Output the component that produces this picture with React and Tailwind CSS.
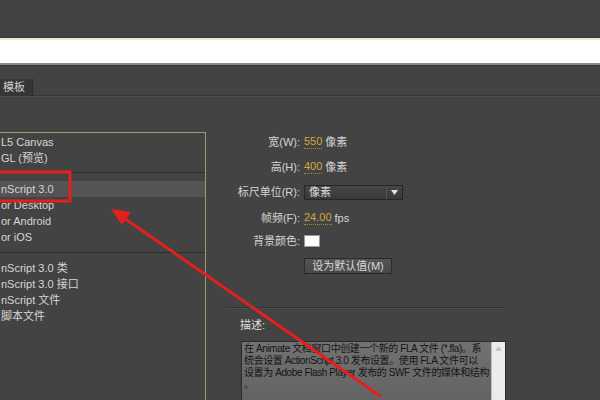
import React from "react";

const leftTop = ["L5 Canvas", "GL (预览)"];
const leftMid = ["or Desktop", "or Android", "or iOS"];
const leftBottom = ["nScript 3.0 类", "nScript 3.0 接口", "nScript 文件", "脚本文件"];

const descLines = [
  "在 Animate 文档窗口中创建一个新的 FLA 文件 (*.fla)。系",
  "统会设置 ActionScript 3.0 发布设置。使用 FLA 文件可以",
  "设置为 Adobe Flash Player 发布的 SWF 文件的媒体和结构",
  "。",
];

const Row = ({ label, children, className = "" }) => (
  <div className={`flex items-center h-[16px] ${className}`}>
    <div className="w-[96px] text-right pr-[2px] text-[#d4d4d4]">{label}</div>
    <div className="flex items-center pl-[2px] gap-[3px]">{children}</div>
  </div>
);

const Value = ({ children }) => (
  <span className="text-[#d2a93e] border-b border-dotted border-[#a48a3c] leading-[13px]">{children}</span>
);

export default function App() {
  return (
    <div
      className="relative w-[600px] h-[400px] overflow-hidden bg-[#434343] text-[11px]"
      style={{ fontFamily: '"Liberation Sans", "Noto Sans CJK SC", sans-serif' }}
    >
      {/* top strip */}
      <div className="h-[38px] bg-[#424242] border-b border-[#3a3a36]" />
      <div className="h-[27px] bg-white border-t-2 border-[#f3ecc4] border-b-2 border-b-[#8a8a8a]" />
      <div className="h-[14px] bg-[#434343] border-t border-[#363636]" />

      {/* tab row */}
      <div className="h-[17px] flex border-b border-[#353535] shadow-[0_1px_0_#4e4e4e]">
        <div className="w-[33px] h-[16px] bg-[#363636] border-r border-[#2c2c2c] text-[#cfcfcf] pl-[3px] leading-[16px]">
          模板
        </div>
      </div>

      <div className="flex">
        {/* left list panel */}
        <div className="mt-[36px] w-[206px] h-[400px] border-t border-r border-[#a09868] text-[#d6d6d6] pt-[1px]">
          {leftTop.map((t) => (
            <div key={t} className="h-[16px] leading-[16px] pl-[1px]">{t}</div>
          ))}
          <div className="mt-[6px] h-px bg-[#2e2e2e]" />
          <div className="mt-[8px] h-[16px] leading-[16px] pl-[1px] bg-[#545454]">nScript 3.0</div>
          {leftMid.map((t) => (
            <div key={t} className="h-[16px] leading-[16px] pl-[1px]">{t}</div>
          ))}
          <div className="mt-[7px] h-px bg-[#2e2e2e]" />
          <div className="mt-[7px]">
            {leftBottom.map((t) => (
              <div key={t} className="h-[16px] leading-[16px] pl-[1px]">{t}</div>
            ))}
          </div>
        </div>

        {/* right settings */}
        <div className="flex-1 pt-[38px]">
          <Row label="宽(W):">
            <Value>550</Value>
            <span className="text-[#d4d4d4]">像素</span>
          </Row>
          <Row label="高(H):" className="mt-[9px]">
            <Value>400</Value>
            <span className="text-[#d4d4d4]">像素</span>
          </Row>
          <Row label="标尺单位(R):" className="mt-[9px]">
            <div className="w-[99px] h-[15px] flex bg-gradient-to-b from-[#464646] to-[#383838] border border-[#262626] text-[#dcdcdc]">
              <span className="flex-1 pl-[4px] leading-[13px]">像素</span>
              <span className="w-[16px] border-l border-[#555] flex items-center justify-center">
                <svg width="7" height="5" viewBox="0 0 7 5"><path d="M0 0h7L3.5 5z" fill="#e6e6e6" /></svg>
              </span>
            </div>
          </Row>
          <Row label="帧频(F):" className="mt-[10px]">
            <Value>24.00</Value>
            <span className="text-[#d4d4d4]">fps</span>
          </Row>
          <Row label="背景颜色:" className="mt-[7px]">
            <div className="w-[16px] h-[12px] bg-white border border-[#999]" />
          </Row>
          <div className="mt-[9px] ml-[98px] w-[88px] h-[16px] bg-gradient-to-b from-[#555] to-[#474747] border border-[#2a2a2a] text-[#dadada] text-center leading-[14px]">
            设为默认值(M)
          </div>

          <div className="mt-[33px] ml-[19px] w-[282px] h-[2px] bg-[#363636] border-b border-[#4c4c4c]" />
          <div className="mt-[9px] ml-[34px] h-[14px] leading-[14px] text-[#e0e0e0]">描述:</div>
          <div className="mt-[9px] ml-[35px] w-[265px] h-[80px] flex border border-[#2a2a2a] bg-gradient-to-b from-[#727272] to-[#5e5e5e]">
            <div className="flex-1 overflow-hidden pl-[2px] pt-[1px] text-[#141414] leading-[12px] text-[10px] tracking-[-0.4px]">
              {descLines.map((l, i) => (
                <div key={i} className="whitespace-nowrap">{l}</div>
              ))}
            </div>
            <div className="w-[14px] bg-[#ececec] border-l border-[#bdbdbd] flex justify-center pt-[4px]">
              <svg width="7" height="5" viewBox="0 0 7 5"><path d="M0 5h7L3.5 0z" fill="#c4c4c4" /></svg>
            </div>
          </div>
        </div>
      </div>

      {/* red annotations */}
      <svg className="absolute inset-0 pointer-events-none" width="600" height="400">
        <rect x="-6" y="172" width="76" height="29" fill="none" stroke="#e3201e" strokeWidth="3" />
        <line x1="380" y1="396" x2="124" y2="218" stroke="#e3201e" strokeWidth="3" strokeLinecap="round" />
        <polygon points="111,209 131,212 122,225" fill="#e3201e" />
      </svg>
    </div>
  );
}
